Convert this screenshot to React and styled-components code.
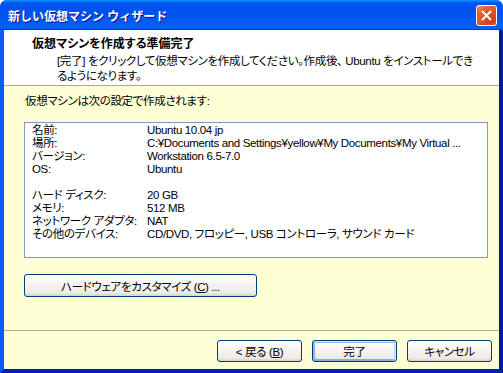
import React from 'react'
import styled, { createGlobalStyle } from 'styled-components'

const GlobalStyle = createGlobalStyle`
  html, body {
    margin: 0;
    padding: 0;
    background: #fff;
  }
  body {
    font-family: "Liberation Sans", "Noto Sans CJK JP", sans-serif;
    font-size: 12px;
    color: #000;
  }
`

const Window = styled.div`
  width: 503px;
  height: 373px;
  display: flex;
  flex-direction: column;
  border-radius: 7px 7px 0 0;
  overflow: hidden;
  background: #0054e3;
`

const TitleBar = styled.div`
  height: 30px;
  flex-shrink: 0;
  box-sizing: border-box;
  display: flex;
  align-items: center;
  justify-content: space-between;
  padding: 0 6px 0 8px;
  background: linear-gradient(
    180deg,
    #0997ff 0%,
    #0053ee 10%,
    #0050ee 40%,
    #0060f8 88%,
    #0062fc 93%,
    #005bff 95%,
    #003dd7 97%,
    #003dd7 100%
  );
`

const Title = styled.span`
  color: #fff;
  font-weight: bold;
  font-size: 12px;
  text-shadow: 1px 1px #0f1089;
`

const CloseButton = styled.div`
  width: 21px;
  height: 21px;
  box-sizing: border-box;
  border: 1px solid #fff;
  border-radius: 3px;
  display: flex;
  align-items: center;
  justify-content: center;
  background: radial-gradient(
    circle at 80% 80%,
    #c93c10 0%,
    #e0562c 50%,
    #e2704a 78%,
    #f5b9a0 95%,
    #fff 100%
  );
  box-shadow: inset 0 -1px 2px 1px #d84a1a;
`

const Client = styled.div`
  flex: 1;
  display: flex;
  flex-direction: column;
  border-left: 4px solid #0a5cf0;
  border-right: 4px solid #001c9a;
  border-bottom: 4px solid #0022aa;
  background: #ffffd5;
  font-feature-settings: "palt";
  font-size: 11.5px;
  letter-spacing: -0.35px;
`

const Header = styled.div`
  height: 56px;
  flex-shrink: 0;
  box-sizing: border-box;
  background: #fff;
  border-bottom: 1px solid #aca899;
  padding: 7px 0 0 28px;
`

const HeaderTitle = styled.div`
  font-weight: bold;
  font-size: 12px;
  line-height: 14px;
  letter-spacing: 0;
`

const HeaderText = styled.div`
  margin: 3px 0 0 25px;
  line-height: 15px;
  white-space: nowrap;
`

const Body = styled.div`
  flex: 1;
  padding: 8px 0 0 20px;
`

const Intro = styled.div`
  padding-left: 1px;
  line-height: 14px;
`

const SummaryBox = styled.div`
  width: 464px;
  height: 136px;
  box-sizing: border-box;
  margin-top: 14px;
  border: 1px solid #7f9db9;
  background: #fff;
  padding: 1px 0 0 7px;
  display: grid;
  grid-template-columns: 115px 1fr;
  grid-auto-rows: 13px;
  line-height: 13px;
  align-content: start;
`

const Cell = styled.div`
  white-space: nowrap;
  overflow: hidden;
`

const Button = styled.button`
  box-sizing: border-box;
  width: ${(p) => p.$width || 85}px;
  height: ${(p) => p.$height || 22}px;
  padding: 0;
  font-family: inherit;
  font-size: inherit;
  font-feature-settings: inherit;
  letter-spacing: inherit;
  color: #000;
  border: 1px solid #003c74;
  border-radius: 3px;
  background: linear-gradient(180deg, #fff 0%, #f6f5f2 40%, #ecebe6 86%, #d6d0c5 100%);
  box-shadow: ${(p) =>
    p.$default
      ? 'inset -1px 1px #cee7ff, inset 1px 2px #98b8ea, inset -2px 0 #bcd4f6, inset 1px -1px #89ade4, inset 2px -2px #89ade4'
      : 'none'};
`

const CustomizeButton = styled(Button)`
  margin-top: 16px;
`

const Footer = styled.div`
  height: 39px;
  flex-shrink: 0;
  box-sizing: border-box;
  border-top: 1px solid #aca899;
  display: flex;
  justify-content: flex-end;
  gap: 10px;
  padding: 9px 7px 0 0;
`

const rows = [
  ['名前:', 'Ubuntu 10.04 jp'],
  ['場所:', 'C:¥Documents and Settings¥yellow¥My Documents¥My Virtual ...'],
  ['バージョン:', 'Workstation 6.5-7.0'],
  ['OS:', 'Ubuntu'],
  ['', ''],
  ['ハード ディスク:', '20 GB'],
  ['メモリ:', '512 MB'],
  ['ネットワーク アダプタ:', 'NAT'],
  ['その他のデバイス:', 'CD/DVD, フロッピー, USB コントローラ, サウンド カード'],
]

export default function App() {
  return (
    <>
      <GlobalStyle />
      <Window>
        <TitleBar>
          <Title>新しい仮想マシン ウィザード</Title>
          <CloseButton>
            <svg width="13" height="13" viewBox="0 0 13 13">
              <path d="M2 2 L11 11 M11 2 L2 11" stroke="#fff" strokeWidth="2" />
            </svg>
          </CloseButton>
        </TitleBar>
        <Client>
          <Header>
            <HeaderTitle>仮想マシンを作成する準備完了</HeaderTitle>
            <HeaderText>
              [完了] をクリックして仮想マシンを作成してください。作成後、 Ubuntu をインストールでき
              <br />
              るようになります。
            </HeaderText>
          </Header>
          <Body>
            <Intro>仮想マシンは次の設定で作成されます:</Intro>
            <SummaryBox>
              {rows.map(([label, value], i) => (
                <React.Fragment key={i}>
                  <Cell>{label}</Cell>
                  <Cell>{value}</Cell>
                </React.Fragment>
              ))}
            </SummaryBox>
            <CustomizeButton $width={233} $height={23}>
              ハードウェアをカスタマイズ (<u>C</u>) ...
            </CustomizeButton>
          </Body>
          <Footer>
            <Button>
              &lt; 戻る (<u>B</u>)
            </Button>
            <Button $default>完了</Button>
            <Button>キャンセル</Button>
          </Footer>
        </Client>
      </Window>
    </>
  )
}
